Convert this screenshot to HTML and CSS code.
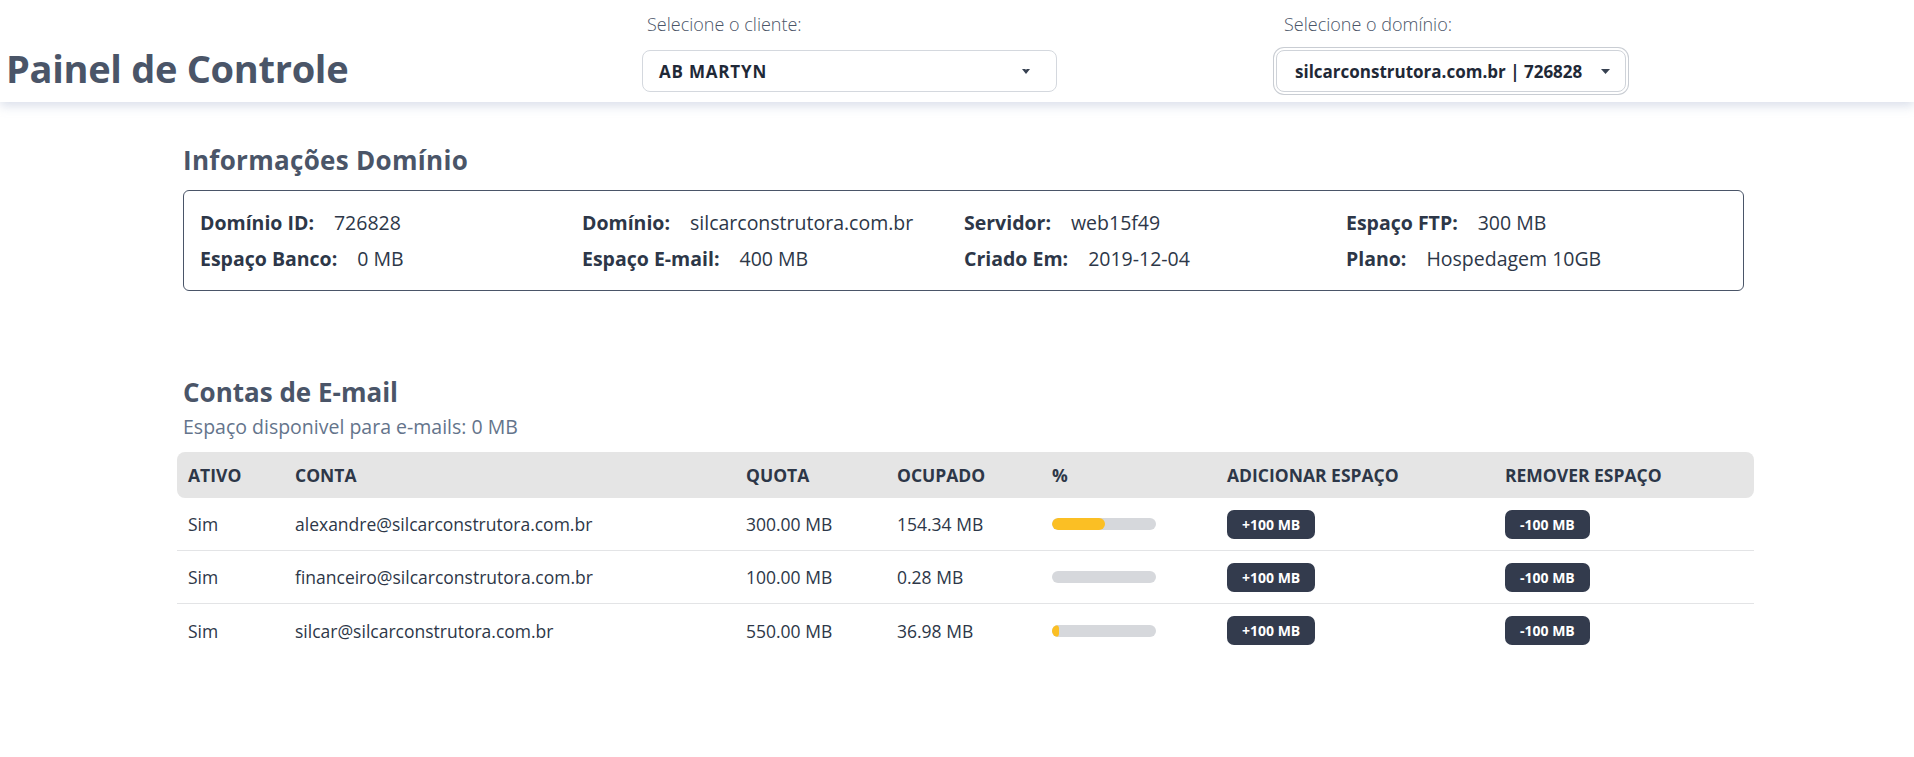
FILE: index.html
```html
<!DOCTYPE html>
<html lang="pt-BR">
<head>
<meta charset="utf-8">
<title>Painel de Controle</title>
<link rel="stylesheet" href="styles.css">
</head>
<body>
<header class="topbar">
  <div class="brand-cell">
    <h1 class="brand">Painel de Controle</h1>
  </div>
  <div class="picker">
    <span class="picker-label">Selecione o cliente:</span>
    <div class="select select-client">
      <span class="select-text">AB MARTYN</span>
      <svg class="caret caret-small" width="8" height="5" viewBox="0 0 8 5"><path d="M0 0H3.4L4 1.2L4.6 0H8L4 5Z" fill="#374151"/></svg>
    </div>
  </div>
  <div class="picker">
    <span class="picker-label">Selecione o domínio:</span>
    <div class="select select-domain">
      <span class="select-text">silcarconstrutora.com.br | 726828</span>
      <svg class="caret" width="9" height="5" viewBox="0 0 9 5"><path d="M0 0H9L4.5 5Z" fill="#374151"/></svg>
    </div>
  </div>
</header>

<main class="content">
  <section class="info">
    <h2 class="section-title">Informações Domínio</h2>
    <div class="info-box">
      <div class="info-item"><span class="info-label">Domínio ID:</span><span class="info-value">726828</span></div>
      <div class="info-item"><span class="info-label">Domínio:</span><span class="info-value">silcarconstrutora.com.br</span></div>
      <div class="info-item"><span class="info-label">Servidor:</span><span class="info-value">web15f49</span></div>
      <div class="info-item"><span class="info-label">Espaço FTP:</span><span class="info-value">300 MB</span></div>
      <div class="info-item"><span class="info-label">Espaço Banco:</span><span class="info-value">0 MB</span></div>
      <div class="info-item"><span class="info-label">Espaço E-mail:</span><span class="info-value">400 MB</span></div>
      <div class="info-item"><span class="info-label">Criado Em:</span><span class="info-value">2019-12-04</span></div>
      <div class="info-item"><span class="info-label">Plano:</span><span class="info-value">Hospedagem 10GB</span></div>
    </div>
  </section>

  <section class="emails">
    <h2 class="section-title">Contas de E-mail</h2>
    <p class="subtitle">Espaço disponivel para e-mails: 0 MB</p>
    <table class="accounts">
      <colgroup>
        <col class="c-ativo"><col class="c-conta"><col class="c-quota"><col class="c-ocupado"><col class="c-pct"><col class="c-add"><col class="c-rem">
      </colgroup>
      <thead>
        <tr>
          <th>Ativo</th><th>Conta</th><th>Quota</th><th>Ocupado</th><th>%</th><th>Adicionar Espaço</th><th>Remover Espaço</th>
        </tr>
      </thead>
      <tbody>
        <tr>
          <td>Sim</td><td>alexandre@silcarconstrutora.com.br</td><td>300.00 MB</td><td>154.34 MB</td>
          <td><div class="bar"><div class="bar-fill" style="width: 51.4%"></div></div></td>
          <td><button class="btn">+100 MB</button></td><td><button class="btn">-100 MB</button></td>
        </tr>
        <tr>
          <td>Sim</td><td>financeiro@silcarconstrutora.com.br</td><td>100.00 MB</td><td>0.28 MB</td>
          <td><div class="bar"><div class="bar-fill" style="width: 0%"></div></div></td>
          <td><button class="btn">+100 MB</button></td><td><button class="btn">-100 MB</button></td>
        </tr>
        <tr>
          <td>Sim</td><td>silcar@silcarconstrutora.com.br</td><td>550.00 MB</td><td>36.98 MB</td>
          <td><div class="bar"><div class="bar-fill" style="width: 6.7%"></div></div></td>
          <td><button class="btn">+100 MB</button></td><td><button class="btn">-100 MB</button></td>
        </tr>
      </tbody>
    </table>
  </section>
</main>
</body>
</html>
```

FILE: styles.css
```css
* { box-sizing: border-box; }

html, body {
  margin: 0;
  padding: 0;
  background: #ffffff;
  font-family: "Open Sans", "Noto Sans", sans-serif;
  color: #2d3748;
}

/* ---------- Top bar ---------- */
.topbar {
  display: grid;
  grid-template-columns: 638px 638px 1fr;
  height: 102px;
  background: #ffffff;
  box-shadow: 0 4px 10px rgba(148, 163, 196, 0.35);
  position: relative;
  z-index: 1;
}

.brand-cell {
  display: flex;
  align-items: center;
  padding-left: 6px;
  padding-top: 34px;
}

.brand {
  margin: 0;
  font-size: 38px;
  line-height: 44px;
  font-weight: 700;
  color: #4a5568;
  letter-spacing: -0.3px;
}

.picker {
  display: flex;
  flex-direction: column;
  align-items: flex-start;
  padding-top: 12px;
  padding-left: 4px;
}

.picker:last-child { padding-left: 0; }

.picker-label {
  font-size: 18px;
  font-weight: 300;
  line-height: 24px;
  color: #4a5568;
  margin-left: 5px;
  margin-bottom: 14px;
}

.picker:last-child .picker-label { margin-left: 8px; }

.select {
  display: flex;
  align-items: center;
  justify-content: space-between;
  height: 42px;
  border: 1px solid #d4d8de;
  border-radius: 8px;
  background: #ffffff;
  font-size: 17px;
  font-weight: 700;
  color: #1f2937;
}

.select-client {
  width: 415px;
  padding: 0 26px 0 16px;
}

.select-client .select-text { letter-spacing: 0.8px; }

.select-domain {
  padding: 0 15px 0 18px;
  gap: 19px;
  border-color: #cfd3d9;
  box-shadow: 0 0 0 2px #ffffff, 0 0 0 3px #c9cdd3;
}

.caret { display: block; flex: none; }

/* ---------- Content ---------- */
.content {
  margin-left: 183px;
  width: 1561px;
  padding-top: 42px;
}

.section-title {
  margin: 0;
  font-size: 26px;
  line-height: 32px;
  font-weight: 700;
  color: #4a5568;
}

.info .section-title { margin-bottom: 14px; letter-spacing: 0.3px; }

.info-box {
  display: grid;
  grid-template-columns: repeat(4, 1fr);
  row-gap: 12px;
  column-gap: 1px;
  border: 1px solid #4a5568;
  border-radius: 6px;
  padding: 20px 16px 19px 16px;
}

.info-item {
  display: flex;
  gap: 20px;
  font-size: 19.5px;
  line-height: 24px;
  color: #2d3748;
}

.info-label { font-weight: 700; }
.info-value { font-weight: 400; }

.emails { margin-top: 85px; }

.subtitle {
  margin: 7px 0 13px 0;
  font-size: 19.5px;
  line-height: 24px;
  color: #64748b;
}

/* ---------- Table ---------- */
.accounts {
  margin-left: -6px;
  width: 1577px;
  border-collapse: separate;
  border-spacing: 0;
  table-layout: fixed;
}

.c-ativo { width: 107px; }
.c-conta { width: 451px; }
.c-quota { width: 151px; }
.c-ocupado { width: 155px; }
.c-pct { width: 175px; }
.c-add { width: 278px; }
.c-rem { width: 260px; }

.accounts th {
  background: #e5e5e5;
  height: 46px;
  padding: 0 11px;
  text-align: left;
  font-size: 17.5px;
  font-weight: 700;
  text-transform: uppercase;
  color: #2d3748;
}

.accounts th:first-child { border-radius: 8px 0 0 8px; }
.accounts th:last-child { border-radius: 0 8px 8px 0; }

.accounts td {
  height: 53px;
  padding: 0 11px;
  font-size: 17.5px;
  color: #2d3748;
  border-bottom: 1px solid #e3e4e6;
  vertical-align: middle;
}

.accounts tbody tr:last-child td { border-bottom: none; }

.bar {
  width: 104px;
  height: 12px;
  border-radius: 6px;
  background: #d6d8dc;
  overflow: hidden;
}

.bar-fill {
  height: 100%;
  background: #fbbf24;
  border-radius: 6px;
}

.btn {
  font-family: inherit;
  height: 29px;
  padding: 0 15px;
  border: none;
  border-radius: 7px;
  background: #333b4d;
  color: #ffffff;
  font-size: 14px;
  font-weight: 700;
  cursor: pointer;
}
```
